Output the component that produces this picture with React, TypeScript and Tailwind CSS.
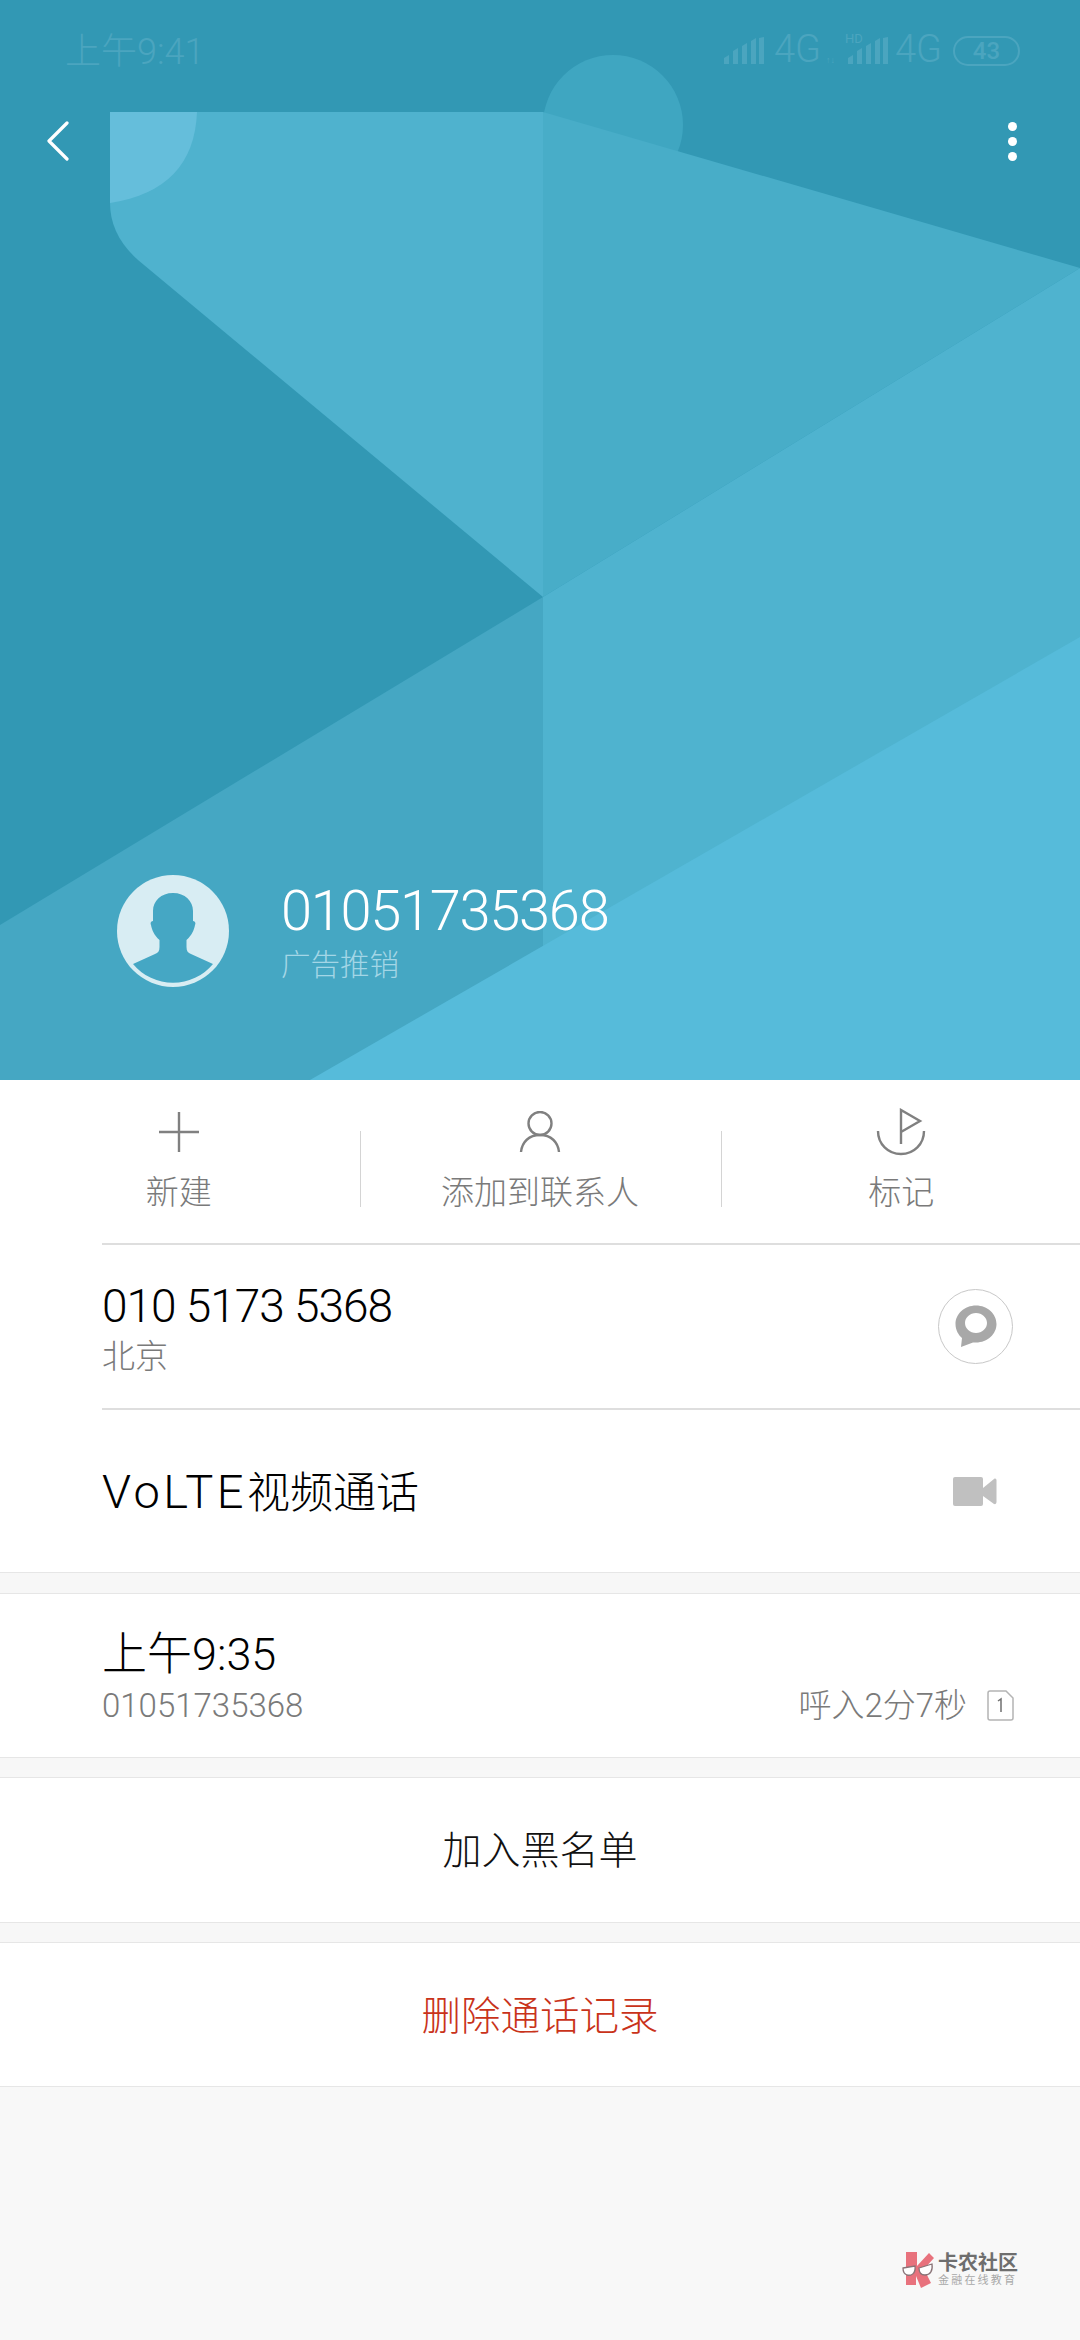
const CJK = "font-['Roboto','Noto_Sans_CJK_SC',sans-serif]";

function Backdrop() {
  return (
    <svg className="absolute inset-0" width="1080" height="1080" viewBox="0 0 1080 1080">
      <rect width="1080" height="1080" fill="#3298b4" />
      <circle cx="613" cy="125" r="70" fill="#3fa6c1" />
      <path d="M110 112H543V597L138 260Q110 235 110 203Z" fill="#4fb2ce" />
      <path d="M110 112H197Q194 190 110 203Z" fill="#65bedb" />
      <path d="M543 112L1080 268L543 597Z" fill="#48adc8" />
      <path d="M0 925L543 597V1080H0Z" fill="#45a7c3" />
      <path d="M543 597L1080 268V1080H543Z" fill="#4fb3cf" />
      <path d="M310 1080L1080 637V1080Z" fill="#56bbda" />
    </svg>
  );
}

function Signal() {
  return (
    <svg width="41" height="28" viewBox="0 36 41 28" fill="#4ba5bf">
      <path d="M0 63v-6l5-3v9z" />
      <path d="M9 63V50l5-3v16z" />
      <path d="M18 63V45l5-3v21z" />
      <path d="M27 63V40l5-3v26z" />
      <path d="M35 63V37l5-1v27z" />
    </svg>
  );
}

function StatusBar() {
  return (
    <div className="relative h-[109px] flex items-start justify-between pl-[65px] pr-[60px] pt-[31px] text-[#4ba5bf]">
      <span className={`${CJK} text-[36px] leading-[42px] font-light`}>上午9:41</span>
      <div className="flex items-end h-[34px] font-['Roboto',sans-serif]">
        <Signal />
        <span className="ml-[9px] w-[48px] font-light text-[38px] leading-[32px]">4G</span>
        <span className="w-[26px] text-[9px] leading-[10px] pl-[4px]">↑↓</span>
        <div className="relative">
          <span className="absolute left-[-3px] top-[-5px] text-[13px] leading-[13px]">HD</span>
          <Signal />
        </div>
        <span className="ml-[6px] w-[48px] font-light text-[38px] leading-[32px]">4G</span>
        <span className="ml-[10px] w-[67px] h-[30px] mb-[-1px] rounded-[15px] border-2 border-[#4ba5bf] flex items-center justify-center font-medium text-[24px] leading-none">43</span>
      </div>
    </div>
  );
}

function Toolbar() {
  return (
    <div className="relative flex items-center justify-between pl-[46px] pr-[63px] h-[64px]">
      <svg width="24" height="40" viewBox="0 0 24 40" fill="none">
        <path d="M21 2L3 20L21 38" stroke="#fff" strokeWidth="3.2" strokeLinecap="round" strokeLinejoin="round" />
      </svg>
      <div className="flex flex-col gap-[6px]">
        <span className="block w-[9px] h-[9px] rounded-full bg-white" />
        <span className="block w-[9px] h-[9px] rounded-full bg-white" />
        <span className="block w-[9px] h-[9px] rounded-full bg-white" />
      </div>
    </div>
  );
}

function Avatar() {
  return (
    <svg width="112" height="112" viewBox="0 0 112 112">
      <circle cx="56" cy="56" r="56" fill="#d8edf3" />
      <path
        d="M56 18C44 18 36 26 36 36V46C34 46 33 48 34 50C35 55 37 60 42.5 65V72C42.5 76 41 78 38 79L16 89A52 52 0 0 0 96 89L74 79C71 78 69.5 76 69.5 72V65C75 60 77 55 78 50C79 48 78 46 76 46V36C76 26 68 18 56 18Z"
        fill="#45a7c4"
      />
    </svg>
  );
}

function PlusIcon() {
  return (
    <svg width="42" height="42" viewBox="0 0 42 42" fill="none" stroke="#808080" strokeWidth="2.4">
      <path d="M21 1V41M1 21H41" />
    </svg>
  );
}

function PersonIcon() {
  return (
    <svg width="42" height="42" viewBox="0 0 42 42" fill="none" stroke="#808080" strokeWidth="2.4">
      <circle cx="21" cy="12.5" r="11.5" />
      <path d="M2 41C3 31 10 24 21 24C32 24 39 31 40 41" />
    </svg>
  );
}

function FlagIcon() {
  return (
    <svg width="50" height="48" viewBox="0 0 50 48" fill="none" stroke="#808080" strokeWidth="2.4">
      <path d="M25 36V2L44 13L25 24" />
      <path d="M2 23C2 36 12 46 25 46C38 46 48 36 48 23" />
    </svg>
  );
}

function ActionCell({ icon, label, pad }: { icon: React.ReactNode; label: string; pad?: string }) {
  return (
    <div className={`flex-1 flex flex-col items-center ${pad ?? ""}`}>
      <div className="h-[46px] mt-[29px] flex items-center justify-center">{icon}</div>
      <span className={`${CJK} font-light mt-[18px] text-[33px] leading-[40px] text-[#7a7a7a]`}>{label}</span>
    </div>
  );
}

function Actions() {
  return (
    <div className="h-[163px] flex">
      <ActionCell icon={<PlusIcon />} label="新建" pad="pr-[3px]" />
      <div className="w-px h-[76px] mt-[51px] bg-[#d4d4d4]" />
      <ActionCell icon={<PersonIcon />} label="添加到联系人" pad="pr-[2px]" />
      <div className="w-px h-[76px] mt-[51px] bg-[#d4d4d4]" />
      <ActionCell icon={<FlagIcon />} label="标记" pad="pl-[1px]" />
    </div>
  );
}

function BubbleIcon() {
  return (
    <svg width="42" height="44" viewBox="0 0 42 44">
      <path
        fillRule="evenodd"
        d="M21 .5C9.5 .5 .5 9 .5 19C.5 25 3.5 30 7 33L6 42L18 37.5C19 37.5 20 37.5 21 37.5C32.5 37.5 41.5 29 41.5 19C41.5 9 32.5 .5 21 .5ZM21 8C27 8 32 12.5 32 18C32 23.5 27 28 21 28C15 28 10 23.5 10 18C10 12.5 15 8 21 8Z"
        fill="#a8a8a8"
      />
    </svg>
  );
}

function VideoIcon() {
  return (
    <svg width="44" height="29" viewBox="0 0 44 29" fill="#c0c0c0">
      <rect x="0" y="0" width="30" height="29" rx="2" />
      <path d="M30 11L41 2C42.5 1 43.5 2 43.5 3.5V25C43.5 26.5 42.5 27.5 41 27L30 19Z" />
    </svg>
  );
}

function SimIcon() {
  return (
    <svg width="27" height="31" viewBox="0 0 27 31" fill="none">
      <path d="M1 3C1 2 2 1 3 1H19L26 8V28C26 29 25 30 24 30H3C2 30 1 29 1 28Z" stroke="#b4b4b4" strokeWidth="1.5" />
      <path d="M11 11L14 9V22" stroke="#707070" strokeWidth="1.5" />
    </svg>
  );
}

function Logo() {
  return (
    <svg width="32" height="36" viewBox="0 0 32 36">
      <path d="M4 0H15V14L27 1L32 6L22 17L29 31L19 36L14 24V33H4Z" fill="#e8727d" />
      <path d="M1 16L13 14C14 22 9 24 5 23C2 22 1 19 1 16ZM17 16L30 12C31 19 28 23 23 23C19 23 17 20 17 16Z" fill="#fff" stroke="#8a7478" strokeWidth="1.3" />
    </svg>
  );
}

function Gap({ h }: { h: string }) {
  return <div className={`${h} shrink-0 border-y border-[#e6e6e6] bg-[#f7f7f7]`} />;
}

export default function App() {
  return (
    <div className={`${CJK} w-[1080px] h-[2340px] bg-[#f8f8f8] flex flex-col overflow-hidden`}>
      <header className="relative h-[1080px] shrink-0 flex flex-col">
        <Backdrop />
        <StatusBar />
        <Toolbar />
        <div className="relative mt-auto mb-[93px] ml-[117px] flex items-center">
          <Avatar />
          <div className="ml-[52px] flex flex-col pt-[2px]">
            <span className="font-['Roboto',sans-serif] font-light text-[56px] leading-[60px] tracking-[-1.3px] text-white">01051735368</span>
            <span className={`${CJK} font-light text-[29.5px] leading-[36px] mt-[6px] text-[#a3d6e6]`}>广告推销</span>
          </div>
        </div>
      </header>

      <section className="bg-white h-[492px] shrink-0 flex flex-col">
        <Actions />
        <div className="ml-[102px] h-[165px] border-t-2 border-[#dedede] flex items-center justify-between pr-[67px]">
          <div className="flex flex-col pt-[4px]">
            <span className="font-['Roboto',sans-serif] font-light text-[46px] leading-[52px] tracking-[-1px] text-black">010 5173 5368</span>
            <span className={`${CJK} font-light text-[33px] leading-[40px] mt-[5px] text-[#7a7a7a]`}>北京</span>
          </div>
          <div className="w-[75px] h-[75px] rounded-full border border-[#c8c8c8] flex items-center justify-center">
            <BubbleIcon />
          </div>
        </div>
        <div className="ml-[102px] flex-1 border-t-2 border-[#dedede] flex items-center justify-between pr-[83px]">
          <span className={`${CJK} font-light text-[43px] leading-[52px] mt-[2px] text-black flex items-baseline`}>
            <span className="text-[47px] tracking-[3.5px]">VoLTE</span>
            <span>视频通话</span>
          </span>
          <VideoIcon />
        </div>
      </section>

      <Gap h="h-[22px]" />

      <section className="bg-white h-[163px] shrink-0 pl-[102px] pr-[66px] flex flex-col justify-center">
        <span className={`${CJK} font-light text-[45px] leading-[52px] mt-[3px] text-black`}>上午9:35</span>
        <div className="flex items-center justify-between mt-[5px]">
          <span className="font-['Roboto',sans-serif] font-light text-[33px] leading-[40px] text-[#7a7a7a]">01051735368</span>
          <div className="flex items-center gap-[20px]">
            <span className={`${CJK} font-light text-[33px] leading-[40px] text-[#7a7a7a]`}>呼入2分7秒</span>
            <SimIcon />
          </div>
        </div>
      </section>

      <Gap h="h-[21px]" />

      <section className="bg-white h-[144px] shrink-0 flex items-center justify-center">
        <span className={`${CJK} font-light text-[39px] leading-[48px] mt-[2px] text-[#111]`}>加入黑名单</span>
      </section>

      <Gap h="h-[21px]" />

      <section className="bg-white h-[144px] shrink-0 flex items-center justify-center border-b border-[#e6e6e6]">
        <span className={`${CJK} font-light text-[39.5px] leading-[48px] mt-[4px] text-[#c9331a]`}>删除通话记录</span>
      </section>

      <div className="flex-1 relative">
        <div className="absolute left-[902px] top-[165px] flex items-center gap-[4px]">
          <Logo />
          <div className="flex flex-col items-start">
            <span className={`${CJK} font-bold text-[20px] leading-[22px] text-[#6e6e6e]`}>卡农社区</span>
            <span className={`${CJK} text-[11px] leading-[14px] tracking-[2.2px] text-[#a8a8a8]`}>金融在线教育</span>
          </div>
        </div>
      </div>
    </div>
  );
}
